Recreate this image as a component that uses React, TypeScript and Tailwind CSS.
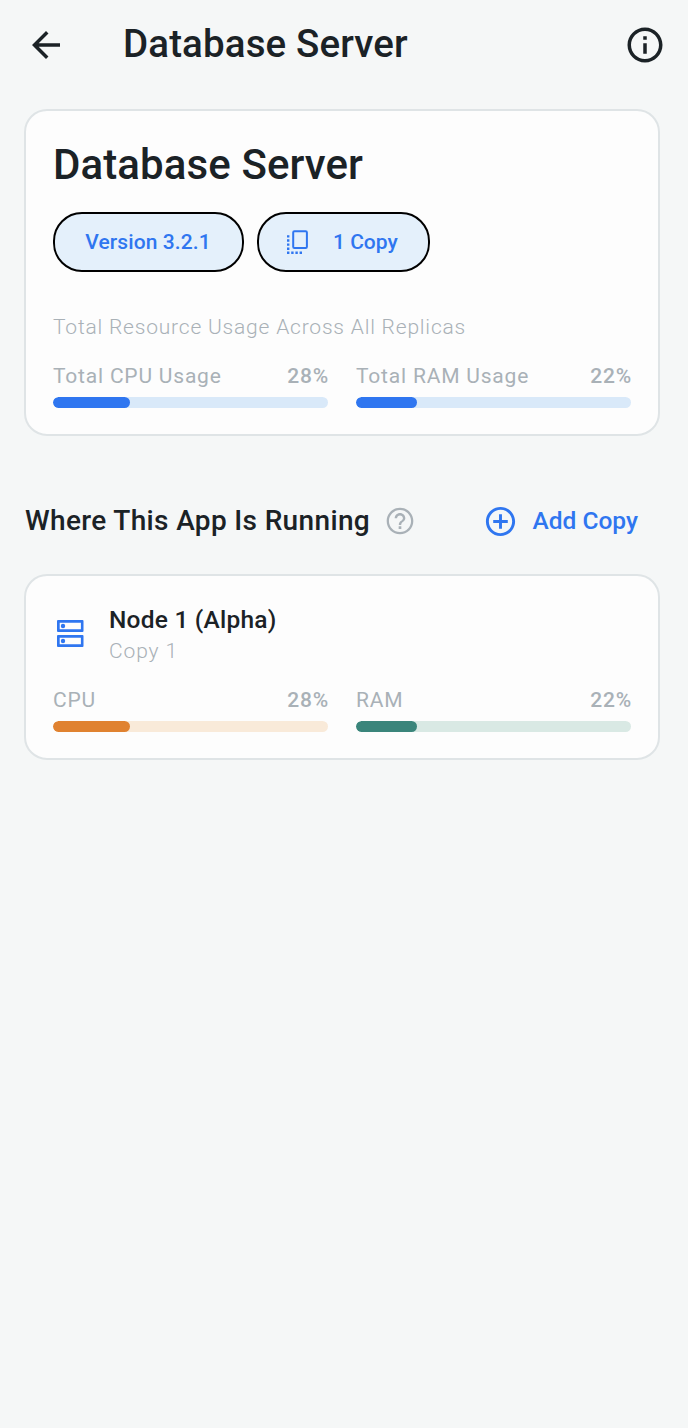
import React from "react";

const ArrowBack = () => (
  <svg viewBox="0 0 24 24" className="size-[42px] fill-[#1b2226]">
    <path d="M20 11H7.83l5.59-5.59L12 4l-8 8 8 8 1.41-1.41L7.83 13H20v-2z" />
  </svg>
);

const InfoOutline = () => (
  <svg viewBox="0 0 24 24" className="size-[42px] fill-[#1b2226]">
    <path d="M11 7h2v2h-2zm0 4h2v6h-2zm1-9C6.48 2 2 6.48 2 12s4.48 10 10 10 10-4.48 10-10S17.52 2 12 2zm0 18c-4.41 0-8-3.59-8-8s3.59-8 8-8 8 3.59 8 8-3.59 8-8 8z" />
  </svg>
);

const HelpOutline = () => (
  <svg viewBox="0 0 24 24" className="size-[32px] fill-[#a9b1b7]">
    <path d="M11 18h2v-2h-2v2zm1-16C6.48 2 2 6.48 2 12s4.48 10 10 10 10-4.48 10-10S17.52 2 12 2zm0 18.300c-4.580 0-8.300-3.720-8.300-8.300s3.720-8.300 8.300-8.300 8.300 3.720 8.300 8.300-3.720 8.300-8.300 8.300zm0-14.300c-2.21 0-4 1.79-4 4h1.800c0-1.200 1-2.200 2.200-2.200s2.200 1 2.200 2.200c0 2-3.100 1.750-3.100 5h1.800c0-2.25 3.100-2.5 3.100-5 0-2.21-1.79-4-4-4z" />
  </svg>
);

const AddCircle = () => (
  <svg viewBox="0 0 24 24" className="size-[35px] fill-[#2f76f0]">
    <path d="M13 7h-2v4H7v2h4v4h2v-4h4v-2h-4V7zm-1-5C6.48 2 2 6.48 2 12s4.48 10 10 10 10-4.48 10-10S17.52 2 12 2zm0 18c-4.41 0-8-3.59-8-8s3.59-8 8-8 8 3.59 8 8-3.59 8-8 8z" />
  </svg>
);

const Servers = () => (
  <svg viewBox="0 0 36 36" className="mb-[2px] size-[36px] fill-[#2f76f0]">
    <path
      fillRule="evenodd"
      d="M5 4h24.500a1 1 0 0 1 1 1v10a1 1 0 0 1-1 1H5a1 1 0 0 1-1-1V5a1 1 0 0 1 1-1zM6.700 6.700v6.600h21.200V6.700zM5 19h24.500a1 1 0 0 1 1 1v10a1 1 0 0 1-1 1H5a1 1 0 0 1-1-1V20a1 1 0 0 1 1-1zM6.700 21.700v6.600h21.200v-6.600z"
    />
    <circle cx="10" cy="10" r="2.200" />
    <circle cx="10" cy="25" r="2.200" />
  </svg>
);

const Copies = () => (
  <svg viewBox="0 0 22 24" className="mb-px h-[24px] w-[22px] fill-[#2f76f0]">
    <rect x="6.200" y="1.200" width="13.700" height="16.800" rx="1.200" fill="none" stroke="#2f76f0" strokeWidth="2" />
    <path d="M0 5.200h2.400v2.400H0zM0 9.300h2.400v2.400H0zM0 13.400h2.400v2.400H0zM0 17.500h2.400v2.400H0zM0 21.600h2.400v2.400H0zM4.200 21.600h2.400v2.400H4.200zM8.400 21.600h2.400v2.400H8.400zM12.600 21.600h2.400v2.400h-2.400z" />
  </svg>
);

type MeterProps = { label: string; value: number; fill: string; track: string };

const Meter = ({ label, value, fill, track }: MeterProps) => (
  <div className="min-w-0 flex-1">
    <div className="flex h-[30px] items-center justify-between pt-[2px] text-[21px] tracking-[0.8px] text-[#a9b1b7]">
      <span>{label}</span>
      <span className="-mr-px font-medium tracking-[0.8px]">{value}%</span>
    </div>
    <div className={`mt-[6px] h-[11px] overflow-hidden rounded-full ${track}`}>
      <div className={`h-full rounded-full ${fill}`} style={{ width: `${value}%` }} />
    </div>
  </div>
);

export default function App() {
  return (
    <div className="min-h-[1428px] w-[688px] bg-[#f5f7f7] font-['Roboto',sans-serif] text-[#1b2226]">
      <header className="flex h-[109px] items-start pt-[24px] pr-[22px] pl-[25px]">
        <ArrowBack />
        <h1 className="ml-[56px] flex-1 text-[38.5px] leading-[40px] font-medium tracking-[0.13px]">Database Server</h1>
        <InfoOutline />
      </header>

      <main className="pr-[28px] pl-[24px]">
        <section className="h-[327px] rounded-[23px] border-2 border-[#dfe4e6] bg-[#fdfdfd] px-[27px] pt-[29px]">
          <h2 className="text-[42px] leading-[50px] font-medium tracking-[0.1px]">Database Server</h2>
          <div className="mt-[22px] flex gap-[13px] text-[21px] font-medium text-[#2f76f0]">
            <div className="flex h-[60px] w-[191px] items-center justify-center rounded-[29px] border-2 border-black bg-[#e4f0fb] pt-[2px] pr-px tracking-[0.1px]">
              Version 3.2.1
            </div>
            <div className="flex h-[60px] w-[173px] items-center rounded-[29px] border-2 border-black bg-[#e4f0fb] pl-[28px]">
              <Copies />
              <span className="ml-[24px] pt-[2px]">1 Copy</span>
            </div>
          </div>
          <p className="mt-[40px] h-[30px] text-[21px] leading-[30px] font-light tracking-[0.8px] text-[#a9b1b7]">
            Total Resource Usage Across All Replicas
          </p>
          <div className="mt-[19px] flex gap-[28px]">
            <Meter label="Total CPU Usage" value={28} fill="bg-[#2f76f0]" track="bg-[#d9e9f9]" />
            <Meter label="Total RAM Usage" value={22} fill="bg-[#2f76f0]" track="bg-[#d9e9f9]" />
          </div>
        </section>

        <div className="flex h-[138px] items-center pt-[32px] pl-px">
          <h3 className="text-[28px] leading-[34px] font-medium tracking-[0.35px]">Where This App Is Running</h3>
          <div className="ml-[14px]">
            <HelpOutline />
          </div>
          <button className="mr-[22px] ml-auto flex items-center gap-[15px] text-[24.5px] font-medium text-[#2f76f0]">
            <AddCircle />
            Add Copy
          </button>
        </div>

        <section className="h-[186px] rounded-[23px] border-2 border-[#dfe4e6] bg-[#fdfdfd] px-[27px] pt-[27px]">
          <div className="flex h-[63px] items-center">
            <Servers />
            <div className="ml-[20px]">
              <h4 className="text-[24.5px] leading-[34px] font-medium tracking-[0.22px]">Node 1 (Alpha)</h4>
              <p className="text-[21px] leading-[29px] font-light tracking-[0.88px] text-[#a9b1b7]">Copy 1</p>
            </div>
          </div>
          <div className="mt-[19px] flex gap-[28px]">
            <Meter label="CPU" value={28} fill="bg-[#e08230]" track="bg-[#f9ead9]" />
            <Meter label="RAM" value={22} fill="bg-[#3a857b]" track="bg-[#d9e9e4]" />
          </div>
        </section>
      </main>
    </div>
  );
}
